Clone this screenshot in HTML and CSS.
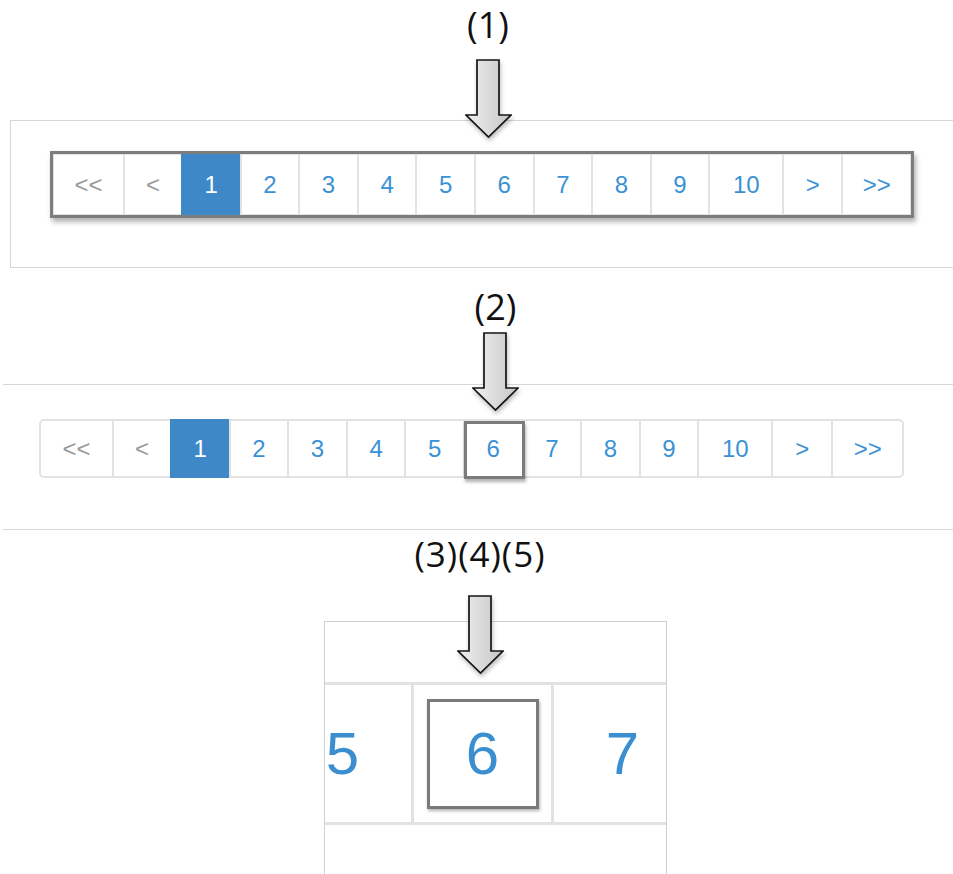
FILE: index.html
```html
<!DOCTYPE html>
<html lang="en">
<head>
  <meta charset="UTF-8">
  <title>Pagination focus states</title>
  <link rel="stylesheet" href="styles.css">
</head>
<body>

<svg class="defs" width="0" height="0" aria-hidden="true">
  <defs>
    <linearGradient id="arrowFill" x1="0" y1="0" x2="1" y2="0">
      <stop offset="0" stop-color="#f0f0f0"/>
      <stop offset="1" stop-color="#c6c6c6"/>
    </linearGradient>
  </defs>
</svg>

<!-- (1) focus frame round the whole pager -->
<div class="fig fig-1">
  <div class="fig-head">
    <div class="callout">(1)</div>
    <svg class="arrow" width="47" height="80" viewBox="0 0 47 80">
      <polygon points="12,1 34,1 34,56 46,56 23.5,78 1,56 12,56" fill="url(#arrowFill)" stroke="#151515" stroke-width="1.7"/>
    </svg>
  </div>
  <div class="panel">
    <div class="frame">
      <ul class="pager">
        <li class="pg-edge off">&lt;&lt;</li>
        <li class="pg-prev off">&lt;</li>
        <li class="pg-num active">1</li>
        <li class="pg-num">2</li>
        <li class="pg-num">3</li>
        <li class="pg-num">4</li>
        <li class="pg-num">5</li>
        <li class="pg-num">6</li>
        <li class="pg-num">7</li>
        <li class="pg-num">8</li>
        <li class="pg-num">9</li>
        <li class="pg-ten">10</li>
        <li class="pg-next">&gt;</li>
        <li class="pg-edge">&gt;&gt;</li>
      </ul>
    </div>
  </div>
</div>

<!-- (2) focus frame round one page -->
<div class="fig fig-2">
  <div class="fig-head">
    <div class="callout">(2)</div>
    <svg class="arrow" width="47" height="80" viewBox="0 0 47 80">
      <polygon points="12,1 34,1 34,56 46,56 23.5,78 1,56 12,56" fill="url(#arrowFill)" stroke="#151515" stroke-width="1.7"/>
    </svg>
  </div>
  <div class="band">
    <ul class="pager">
      <li class="pg-edge off">&lt;&lt;</li>
      <li class="pg-prev off">&lt;</li>
      <li class="pg-num active">1</li>
      <li class="pg-num">2</li>
      <li class="pg-num">3</li>
      <li class="pg-num">4</li>
      <li class="pg-num">5</li>
      <li class="pg-num marked">6</li>
      <li class="pg-num">7</li>
      <li class="pg-num">8</li>
      <li class="pg-num">9</li>
      <li class="pg-ten">10</li>
      <li class="pg-next">&gt;</li>
      <li class="pg-edge">&gt;&gt;</li>
    </ul>
  </div>
</div>

<!-- (3)(4)(5) close-up -->
<div class="fig fig-3">
  <div class="fig-head">
    <div class="callout">(3)(4)(5)</div>
    <svg class="arrow" width="47" height="80" viewBox="0 0 47 80">
      <polygon points="12,1 34,1 34,56 46,56 23.5,78 1,56 12,56" fill="url(#arrowFill)" stroke="#151515" stroke-width="1.7"/>
    </svg>
  </div>
  <div class="zoom-box">
    <div class="zoom-row">
      <div class="zoom-cell">5</div>
      <div class="zoom-cell"><span class="zoom-mark">6</span></div>
      <div class="zoom-cell">7</div>
    </div>
  </div>
</div>

</body>
</html>
```

FILE: styles.css
```css
html, body {
  margin: 0;
  padding: 0;
  background: #fff;
  overflow: hidden;
}
body {
  width: 953px;
  height: 874px;
  font-family: "Liberation Sans", Arial, sans-serif;
}
.defs {
  position: absolute;
}

/* callout label + arrow */
.fig-head {
  display: flex;
  flex-direction: column;
  align-items: center;
}
.fig-1 .fig-head { padding-left: 23px; }
.fig-2 .fig-head { padding-left: 38px; margin-top: 19px; }
.fig-3 .fig-head { padding-left: 7px; margin-top: 4px; }

.callout {
  font-family: "Open Sans", sans-serif;
  font-size: 36px;
  line-height: 40px;
  height: 40px;
  color: #111;
}
.fig-1 .callout {
  line-height: 49px;
  height: 49px;
}
.fig-3 .callout {
  font-size: 35px;
  letter-spacing: 1px;
}
.arrow {
  display: block;
  position: relative;
  z-index: 2;
  filter: drop-shadow(1px 3px 2px rgba(0,0,0,0.25));
}
.fig-1 .arrow { margin-top: 10px; }
.fig-2 .arrow { margin-top: 5px; }
.fig-3 .arrow { margin-top: 21px; }

/* pager */
.pager {
  display: flex;
  list-style: none;
  margin: 0;
  padding: 0;
  border: 2px solid #e2e2e2;
  border-radius: 5px;
  background: #fff;
}
.pager li {
  box-sizing: border-box;
  flex: none;
  height: 55px;
  line-height: 55px;
  text-align: center;
  font-size: 24px;
  color: #3a92d4;
  border-left: 2px solid #e2e2e2;
}
.pager li:first-child {
  border-left: none;
}
.pager .off {
  color: #9a9a9a;
}
.pager .active {
  background: #3e88c8;
  border-left-color: #3e88c8;
  color: #fff;
  height: 59px;
  line-height: 59px;
  margin: -2px 0;
}
.pg-edge { width: 69px; }
.pg-prev { width: 58px; }
.pg-num  { width: 58.6px; }
.pg-ten  { width: 74px; }
.pg-next { width: 59px; }

/* (1) */
.panel {
  position: relative;
  margin-top: -19px;
  margin-left: 10px;
  padding: 30px 0 49px 39px;
  border: 1px solid #d6d6d6;
  border-right: none;
  background: #fff;
}
.frame {
  width: fit-content;
  border: 3px solid #7d7d7d;
  box-shadow: 2px 4px 5px rgba(0,0,0,0.3);
}
.frame .pager {
  border-width: 1px;
  border-radius: 0;
}
.frame .pager li {
  height: 59px;
  line-height: 59px;
}
.frame .pager .active {
  margin: -1px 0;
  height: 61px;
  line-height: 61px;
}

/* (2) */
.band {
  position: relative;
  margin-top: -28px;
  margin-left: 3px;
  padding: 34px 0 51px 36px;
  border-top: 1px solid #d6d6d6;
  border-bottom: 1px solid #d6d6d6;
}
.band .pager {
  width: fit-content;
}
.band .pg-edge { width: 71px; }
.band .pg-next { width: 60px; }
.pager .marked {
  position: relative;
}
.pager .marked::after {
  content: "";
  position: absolute;
  top: 0;
  left: -1px;
  right: -3px;
  bottom: -3px;
  border: 3px solid #7b7b7b;
  box-shadow: 1px 3px 3px rgba(0,0,0,0.3);
}

/* (3)(4)(5) */
.zoom-box {
  position: relative;
  margin-top: -54px;
  margin-left: 324px;
  width: 343px;
  height: 260px;
  box-sizing: border-box;
  padding-top: 60px;
  border: 1px solid #cfcfcf;
  border-bottom: none;
  overflow: hidden;
  background: #fff;
}
.zoom-row {
  display: flex;
  margin-left: -51px;
  border-top: 3px solid #e2e2e2;
  border-bottom: 3px solid #e2e2e2;
}
.zoom-cell {
  box-sizing: border-box;
  flex: none;
  width: 140px;
  height: 137px;
  border-right: 3px solid #e2e2e2;
  display: flex;
  align-items: center;
  justify-content: center;
  font-size: 60px;
  line-height: 1;
  color: #3b8fd0;
}
.zoom-mark {
  box-sizing: border-box;
  width: 112px;
  height: 110px;
  display: flex;
  align-items: center;
  justify-content: center;
  border: 3px solid #7a7a7a;
  box-shadow: 1px 2px 3px rgba(0,0,0,0.3);
}
```
